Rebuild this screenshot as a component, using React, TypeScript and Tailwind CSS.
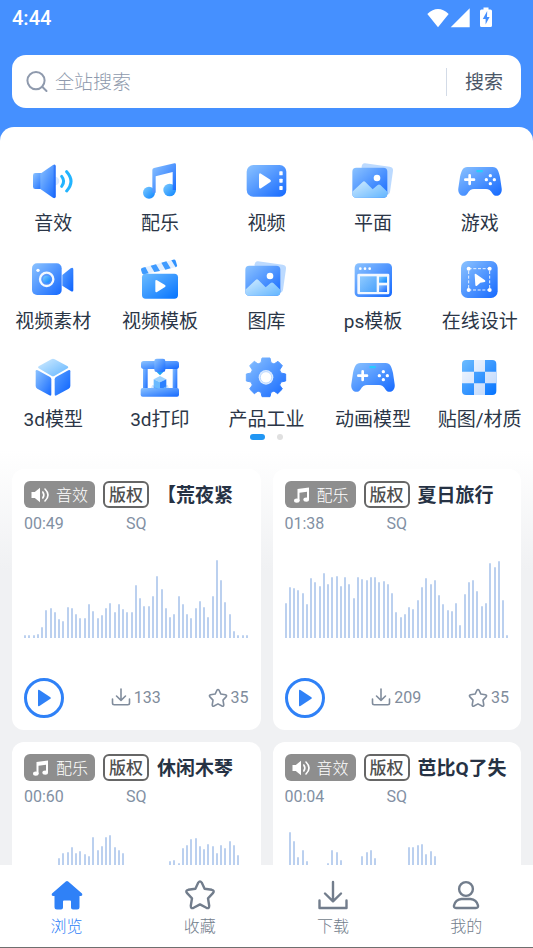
import React from 'react';

type TagKind = 'sound' | 'music';

interface Track {
  kind: TagKind;
  title: string;
  duration: string;
  quality: string;
  downloads: number;
  stars: number;
  wave: number[];
}

const tracks: Track[] = [
  {
    kind: 'sound',
    title: '【荒夜紧',
    duration: '00:49',
    quality: 'SQ',
    downloads: 133,
    stars: 35,
    wave: [
      3, 3, 3, 4, 11, 28, 30, 26, 19, 17, 31, 30, 24, 20, 20, 34, 27, 20, 23, 30, 35, 26, 34, 29, 26, 26, 53,
      40, 32, 32, 42, 62, 49, 30, 21, 24, 42, 34, 24, 20, 30, 37, 31, 21, 42, 78, 58, 36, 24, 7, 3, 3, 3,
    ],
  },
  {
    kind: 'music',
    title: '夏日旅行',
    duration: '01:38',
    quality: 'SQ',
    downloads: 209,
    stars: 35,
    wave: [
      35, 51, 50, 48, 45, 34, 60, 56, 52, 65, 54, 61, 62, 52, 61, 54, 40, 61, 59, 58, 61, 61, 56, 57, 54, 45,
      26, 21, 24, 31, 29, 38, 51, 60, 54, 58, 43, 34, 28, 27, 35, 13, 44, 56, 58, 47, 32, 35, 75, 71, 77, 38, 3,
    ],
  },
  {
    kind: 'music',
    title: '休闲木琴',
    duration: '00:60',
    quality: 'SQ',
    downloads: 121,
    stars: 28,
    wave: [
      3, 3, 4, 8, 15, 20, 30, 38, 53, 58, 59, 64, 58, 60, 57, 55, 74, 61, 65, 74, 76, 64, 61, 58, 40, 30, 20,
      12, 15, 24, 35, 45, 40, 41, 50, 51, 48, 63, 66, 72, 73, 65, 62, 67, 65, 58, 66, 63, 70, 66, 56, 10, 3,
    ],
  },
  {
    kind: 'sound',
    title: '芭比Q了失',
    duration: '00:04',
    quality: 'SQ',
    downloads: 96,
    stars: 17,
    wave: [
      46, 79, 70, 54, 61, 50, 38, 25, 20, 32, 48, 61, 59, 51, 36, 22, 18, 34, 55, 59, 61, 53, 38, 24, 16, 12,
      20, 30, 40, 64, 64, 66, 67, 57, 60, 55, 38, 26, 18, 12, 10, 8, 6, 5, 4, 3, 3, 3, 3, 3, 3, 3, 3,
    ],
  },
];

function SpeakerArt() {
  return (
    <>
      <circle cx="72" cy="66" r="13" fill="#dbe9ff" />
      <rect x="6" y="42" width="34" height="48" rx="7" fill="url(#blue)" />
      <path d="M28 44 L66 18 Q74 14 74 22 V112 Q74 120 66 116 L28 90Z" fill="url(#blue)" />
      <path d="M68 18 Q74 15 74 22 V112 Q74 119 68 117Z" fill="#1f66f5" opacity="0.6" />
      <path d="M92 52 Q104 67 92 82" fill="none" stroke="#22b4ff" strokeWidth="9" strokeLinecap="round" />
      <path d="M107 38 Q133 67 107 96" fill="none" stroke="#22b4ff" strokeWidth="9" strokeLinecap="round" />
    </>
  );
}

function NoteArt() {
  return (
    <>
      <circle cx="33" cy="101" r="18" fill="url(#aqua)" />
      <circle cx="95" cy="93" r="19" fill="url(#aqua)" />
      <path d="M43 33 Q43 28 48 27 L109 13 Q114 12 114 17 V93 H104 V39 L53 52 V101 H43Z" fill="url(#blue)" />
    </>
  );
}

function FilmArt() {
  return (
    <>
      <rect x="8" y="18" width="119" height="95" rx="20" fill="url(#blue)" />
      <path d="M45 48 Q45 41 51 44 L79 62 Q83 66 79 69 L51 88 Q45 90 45 84Z" fill="#fff" />
      <rect x="106" y="37" width="10" height="12" rx="2" fill="#fff" />
      <rect x="106" y="59" width="10" height="12" rx="2" fill="#fff" />
      <rect x="106" y="81" width="10" height="12" rx="2" fill="#fff" />
    </>
  );
}

function PictureArt() {
  return (
    <>
      <path d="M42 13 L116 23 Q127 25 126 35 L117 98 Q115 108 105 107 L30 97 L32 22 Q34 12 42 13Z" fill="#bcdaff" />
      <rect x="4" y="26" width="105" height="90" rx="12" fill="url(#blue)" />
      <path
        d="M4 98 L35 69 Q39 65 43 69 L65 91 L80 78 Q84 75 88 78 L109 98 V104 Q109 116 97 116 H16 Q4 116 4 104Z"
        fill="url(#sky)"
      />
      <circle cx="78" cy="57" r="10" fill="#fff" />
    </>
  );
}

function GamepadArt() {
  return (
    <>
      <path
        d="M28 24 H104 C118 24 122 36 126 54 L131 88 C134 108 114 118 104 104 C98 94 92 90 84 90 H48 C40 90 34 94 28 104 C18 118 -2 108 1 88 L6 54 C10 36 14 24 28 24Z"
        fill="url(#blue)"
      />
      <path d="M35 49 V75 M22 62 H48" stroke="#fff" strokeWidth="8" strokeLinecap="round" />
      <circle cx="97" cy="50" r="5" fill="#fff" />
      <circle cx="97" cy="74" r="5" fill="#fff" />
      <circle cx="85" cy="62" r="5" fill="#fff" />
      <circle cx="109" cy="62" r="5" fill="#fff" />
      <rect x="55" y="33" width="20" height="7" rx="3" fill="#27ccff" />
    </>
  );
}

function CameraArt() {
  return (
    <>
      <path d="M94 54 L119 34 Q127 29 127 38 V98 Q127 107 119 102 L94 86Z" fill="url(#deep)" />
      <rect x="3" y="19" width="89" height="95" rx="15" fill="url(#blue)" />
      <circle cx="47" cy="67" r="20" fill="none" stroke="#f2f8ff" strokeWidth="7" />
      <circle cx="47" cy="67" r="11" fill="url(#aqua)" />
      <circle cx="21" cy="40" r="5" fill="#fff" />
    </>
  );
}

function ClapperArt() {
  return (
    <>
      <path d="M9 38 Q8 33 14 32 L106 8 Q111 7 113 11 L117 25 Q118 29 113 31 L19 52 Q13 53 12 48Z" fill="#e4f0ff" />
      <path d="M9 38 Q8 33 14 32 L22 30 L32 49 L19 52 Q13 53 12 48Z" fill="#3f9bff" />
      <path d="M38 26 L54 22 L66 42 L49 45Z M70 17 L85 13 L98 34 L82 38Z" fill="#3f9bff" />
      <path d="M100 10 L106 8 Q111 7 113 11 L117 25 Q118 29 113 31Z" fill="#2f92ff" />
      <rect x="12" y="50" width="108" height="75" rx="11" fill="url(#azure)" />
      <path d="M52 73 Q52 67 57 70 L81 84 Q85 87 81 90 L57 105 Q52 107 52 102Z" fill="#fff" />
    </>
  );
}

function TemplateArt() {
  return (
    <>
      <rect x="11" y="19" width="112" height="101" rx="13" fill="url(#blue)" />
      <circle cx="28" cy="35" r="4" fill="#fff" />
      <circle cx="42" cy="35" r="4" fill="#fff" />
      <circle cx="56" cy="35" r="4" fill="#fff" />
      <rect x="19" y="50" width="96" height="62" rx="4" fill="#f3f8ff" />
      <rect x="27" y="58" width="50" height="47" fill="url(#sky2)" />
      <rect x="84" y="59" width="24" height="18" fill="url(#aqua)" />
      <rect x="84" y="85" width="24" height="20" fill="url(#blue)" />
    </>
  );
}

function DesignArt() {
  return (
    <>
      <rect x="9" y="12" width="110" height="111" rx="20" fill="url(#blue)" />
      <rect x="32" y="35" width="63" height="64" fill="none" stroke="#e8f2ff" strokeWidth="3" strokeDasharray="9 5" />
      <circle cx="32" cy="35" r="6" fill="#fff" />
      <circle cx="95" cy="35" r="6" fill="#fff" />
      <circle cx="32" cy="99" r="6" fill="#fff" />
      <circle cx="95" cy="99" r="6" fill="#fff" />
      <path d="M50 53 Q50 48 54 51 L81 70 Q84 74 80 75 L67 77 L57 86 Q52 88 52 84Z" fill="#fff" />
    </>
  );
}

function CubeArt() {
  return (
    <>
      <path d="M61 13 Q66 10 71 13 L110 34 Q114 37 110 40 L71 62 Q66 65 61 62 L23 40 Q19 37 23 34Z" fill="url(#sky)" />
      <path d="M14 49 Q14 43 20 46 L57 66 Q61 69 61 73 V118 Q61 124 55 121 L19 101 Q14 98 14 93Z" fill="url(#blue)" />
      <path d="M118 49 Q118 43 112 46 L75 66 Q71 69 71 73 V118 Q71 124 77 121 L113 101 Q118 98 118 93Z" fill="url(#deep)" />
    </>
  );
}

function PrinterArt() {
  return (
    <>
      <rect x="15" y="30" width="14" height="80" fill="url(#blue)" />
      <rect x="104" y="30" width="14" height="80" fill="url(#blue)" />
      <rect x="9" y="18" width="114" height="24" rx="8" fill="url(#blue)" />
      <rect x="49" y="11" width="33" height="40" rx="7" fill="url(#blue)" />
      <path d="M56 51 H76 L66 61Z" fill="#1fa4f5" />
      <path d="M43 90 H89 L95 104 H36Z" fill="#d3e6ff" />
      <path d="M66 63 L85 73 L66 82 L47 73Z" fill="#9ed3ff" />
      <path d="M47 73 L66 82 V104 L47 95Z" fill="#6bbaff" />
      <path d="M85 73 L66 82 V104 L85 95Z" fill="#2b80ff" />
      <rect x="8" y="99" width="115" height="26" rx="6" fill="url(#blue)" />
      <path d="M47 94 L66 104 L85 94 V99 L66 106 L47 99Z" fill="#5aa9ff" />
    </>
  );
}

function GearArt() {
  return (
    <>
      <path
        d="M54 9 H78 L81 23 L90 27 L102 19 L115 32 L107 45 L111 54 L125 57 V78 L111 81 L107 90 L115 102 L101 116 L90 108 L81 112 L78 125 H54 L51 112 L42 108 L31 116 L17 102 L25 90 L21 81 L7 78 V57 L21 54 L25 45 L17 32 L31 19 L42 27 L51 23Z"
        fill="url(#blue)"
        stroke="url(#blue)"
        strokeWidth="3"
        strokeLinejoin="round"
      />
      <circle cx="66" cy="67" r="22" fill="#dcebff" />
      <circle cx="66" cy="67" r="17" fill="#fff" stroke="#a9cdff" strokeWidth="2" />
    </>
  );
}

function CheckerArt() {
  return (
    <>
      <rect x="12" y="15" width="103" height="105" rx="12" fill="url(#azure)" />
      <path d="M48 15 H81 V50 H48Z M12 50 H48 V85 H12Z M81 50 H115 V85 H81Z M48 85 H81 V120 H48Z" fill="url(#pale)" />
    </>
  );
}

const categories = [
  { name: '音效', Art: SpeakerArt },
  { name: '配乐', Art: NoteArt },
  { name: '视频', Art: FilmArt },
  { name: '平面', Art: PictureArt },
  { name: '游戏', Art: GamepadArt },
  { name: '视频素材', Art: CameraArt },
  { name: '视频模板', Art: ClapperArt },
  { name: '图库', Art: PictureArt },
  { name: 'ps模板', Art: TemplateArt },
  { name: '在线设计', Art: DesignArt },
  { name: '3d模型', Art: CubeArt },
  { name: '3d打印', Art: PrinterArt },
  { name: '产品工业', Art: GearArt },
  { name: '动画模型', Art: GamepadArt },
  { name: '贴图/材质', Art: CheckerArt },
];

// Gradients shared by all category icons
function Gradients() {
  const stops: [string, string, string][] = [
    ['blue', '#8cc3ff', '#1569ff'],
    ['deep', '#5aa0ff', '#0b62ff'],
    ['azure', '#6cbcff', '#0573ff'],
    ['aqua', '#7fcbff', '#0a84ff'],
    ['sky', '#d2ecff', '#62b5ff'],
    ['sky2', '#8fcaff', '#4ba2fb'],
    ['pale', '#f4f8ff', '#bcd6fb'],
  ];
  return (
    <svg className="absolute size-0" aria-hidden="true">
      <defs>
        {stops.map(([id, from, to]) => (
          <linearGradient key={id} id={id} x1="0" y1="0" x2="1" y2="1">
            <stop offset="0" stopColor={from} />
            <stop offset="1" stopColor={to} />
          </linearGradient>
        ))}
      </defs>
    </svg>
  );
}

function StarIcon({ className }: { className: string }) {
  return (
    <svg viewBox="0 0 32 32" className={className} fill="none" stroke="currentColor" strokeLinejoin="round" aria-hidden="true">
      <path d="M14.3 3.6 Q16 1.2 17.7 3.6 L20.6 9.7 L27.8 10.8 Q31 11.6 28.9 14.2 L24 19.3 L25.2 26.8 Q25.2 30 22.4 28.8 L16 25.4 L9.6 28.8 Q6.8 30 6.8 26.8 L8 19.3 L3.1 14.2 Q1 11.6 4.2 10.8 L11.4 9.7Z" />
    </svg>
  );
}

function TagIcon({ kind }: { kind: TagKind }) {
  if (kind === 'sound') {
    return (
      <svg viewBox="0 0 20 20" className="size-5" fill="none" stroke="#fff" strokeLinecap="round" aria-hidden="true">
        <path d="M0.5 7 H3.8 L9 2.8 V17.2 L3.8 13 H0.5Z" fill="#fff" stroke="none" />
        <path d="M11.8 7 Q13.9 10 11.8 13" strokeWidth="1.6" />
        <path d="M14 4 Q20 10 14 16" strokeWidth="1.6" />
      </svg>
    );
  }
  return (
    <svg viewBox="0 0 20 20" className="size-5" fill="#fff" aria-hidden="true">
      <path d="M5.5 4 L17 2.5 V14.5 H15 V6.8 L7.5 7.8 V16 H5.5Z" />
      <ellipse cx="4.8" cy="15.6" rx="2.8" ry="2.2" />
      <ellipse cx="14.2" cy="14.6" rx="2.8" ry="2.2" />
    </svg>
  );
}

function TrackCard({ track }: { track: Track }) {
  return (
    <article className="min-w-0 rounded-xl bg-white p-3">
      <div className="flex h-[27px] items-center gap-2 overflow-hidden whitespace-nowrap">
        <span className="flex h-full shrink-0 items-center gap-[5px] rounded-md bg-[#8e8e8e] px-[7px] text-base font-light text-white">
          <TagIcon kind={track.kind} />
          <span className="pt-0.5 leading-[25px]">{track.kind === 'sound' ? '音效' : '配乐'}</span>
        </span>
        <span className="flex h-full shrink-0 items-center rounded-md border-2 border-[#666] px-1 pt-0.5 text-[17px] leading-[21px] font-medium text-[#505050]">
          版权
        </span>
        <h2 className="pt-0.5 text-[19px] leading-[27px] font-bold text-[#263244]">{track.title}</h2>
      </div>
      <div className="mt-1 flex h-6 items-center text-base text-[#8290a3]">
        <span className="w-[102px]">{track.duration}</span>
        <span>{track.quality}</span>
      </div>
      <div className="mt-[22px] flex h-20 items-end justify-between">
        {track.wave.map((h, i) => (
          <span key={i} className="w-[2px] rounded-t-full bg-[#bbd0ef]" style={{ height: h }} />
        ))}
      </div>
      <div className="mt-10 flex items-center justify-between text-base text-[#808c9c]">
        <button
          type="button"
          aria-label="播放"
          className="flex size-10 items-center justify-center rounded-full border-3 border-[#2f81f7] text-[#2f81f7]"
        >
          <svg viewBox="0 0 16 18" className="h-[18px] w-4" fill="currentColor" aria-hidden="true">
            <path d="M2 1.8 Q2 0.2 3.4 1 L14.4 8.2 Q15.4 9 14.4 9.8 L3.4 17 Q2 17.8 2 16.2Z" />
          </svg>
        </button>
        <button type="button" className="flex items-center gap-[3px]">
          <svg
            viewBox="0 0 20 20"
            className="size-5"
            fill="none"
            stroke="currentColor"
            strokeWidth="1.6"
            strokeLinecap="round"
            strokeLinejoin="round"
            aria-hidden="true"
          >
            <path d="M10 1 V12 M5.5 8 L10 12.3 L14.5 8 M1.5 11 V15 Q1.5 16.7 3.2 16.7 H16.8 Q18.5 16.7 18.5 15 V11" />
          </svg>
          {track.downloads}
        </button>
        <button type="button" className="flex items-center gap-[3px]">
          <StarIcon className="size-5 stroke-[2.6]" />
          {track.stars}
        </button>
      </div>
    </article>
  );
}

function StatusBar() {
  return (
    <div className="flex h-9 items-center justify-between pr-10 pl-3 text-white">
      <span className="text-xl leading-9 font-medium">4:44</span>
      <div className="flex items-center">
        <svg viewBox="0 0 66 66" className="size-[22px]" fill="currentColor" aria-hidden="true">
          <path d="M33 61 L1 21 Q33 -9 65 21Z" />
        </svg>
        <svg viewBox="0 0 66 66" className="size-[22px]" fill="currentColor" aria-hidden="true">
          <path d="M62 4 V61 H5Z" />
        </svg>
        <svg viewBox="0 0 14 22" className="ml-2 h-[22px] w-3.5" aria-hidden="true">
          <path
            d="M4.5 0.5 H9.5 V2.5 H11.5 Q13 2.5 13 4 V18.5 Q13 20 11.5 20 H2.5 Q1 20 1 18.5 V4 Q1 2.5 2.5 2.5 H4.5Z"
            fill="currentColor"
          />
          <path d="M8.2 4 L3.8 12 H6.6 V17.5 L10.6 10 H8Z" fill="#4590ff" />
        </svg>
      </div>
    </div>
  );
}

function SearchBar() {
  return (
    <form role="search" className="mx-3 mt-[19px] flex h-[53px] items-center rounded-[14px] bg-white pr-[18px] pl-[14px]">
      <svg viewBox="0 0 22 22" className="size-[22px] shrink-0" fill="none" stroke="#8f9aad" strokeWidth="2" strokeLinecap="round" aria-hidden="true">
        <circle cx="10" cy="9.6" r="8.6" />
        <path d="M16.2 15.8 L20.5 20" />
      </svg>
      <input
        type="text"
        aria-label="全站搜索"
        placeholder="全站搜索"
        className="ml-[7px] min-w-0 flex-1 pt-1 text-[19px] font-light text-[#263244] outline-none placeholder:text-[#8f9aad]"
      />
      <span className="h-7 w-px bg-[#d3dbe7]" />
      <button type="submit" className="ml-[18px] pt-1 text-[19px] text-[#4b5768]">
        搜索
      </button>
    </form>
  );
}

const tabs = [
  {
    name: '浏览',
    icon: (
      <svg viewBox="0 0 32 32" className="size-8" fill="currentColor" aria-hidden="true">
        <path d="M14.8 2.5 Q16 1.4 17.2 2.5 L31 14.4 Q32 16.6 29.8 17 H28.5 V28 Q28.5 30.5 26 30.5 H22 Q20 30.5 20 28.5 V22.5 Q20 21.5 19 21.5 H13 Q12 21.5 12 22.5 V28.5 Q12 30.5 10 30.5 H6 Q3.5 30.5 3.5 28 V17 H2.2 Q0 16.6 1 14.4Z" />
      </svg>
    ),
  },
  { name: '收藏', icon: <StarIcon className="size-8 stroke-[2.4]" /> },
  {
    name: '下载',
    icon: (
      <svg
        viewBox="0 0 32 32"
        className="size-8"
        fill="none"
        stroke="currentColor"
        strokeWidth="2.4"
        strokeLinecap="round"
        strokeLinejoin="round"
        aria-hidden="true"
      >
        <path d="M16 3 V22 M8 14.5 L16 22.3 L24 14.5 M2.5 21.5 V29 H29.5 V21.5" />
      </svg>
    ),
  },
  {
    name: '我的',
    icon: (
      <svg viewBox="0 0 32 32" className="size-8" fill="none" stroke="currentColor" strokeWidth="2.4" aria-hidden="true">
        <circle cx="16" cy="10" r="6.9" />
        <path d="M11.5 20 H20.5 Q26.5 20.5 28 26.5 Q28.4 29 26 29 H6 Q3.6 29 4 26.5 Q5.5 20.5 11.5 20Z" />
      </svg>
    ),
  },
];

export default function App() {
  return (
    <div className="flex h-dvh flex-col bg-[#4590ff] font-['Roboto','Noto_Sans_CJK_SC',sans-serif]">
      <Gradients />
      <header className="shrink-0 pb-[19px]">
        <StatusBar />
        <SearchBar />
      </header>

      <main className="min-h-0 flex-1 overflow-y-auto rounded-t-[14px] bg-white [scrollbar-width:none]">
        <section className="grid grid-cols-5 gap-y-[19px] pt-8">
          {categories.map(({ name, Art }) => (
            <a key={name} href="#" className="flex flex-col items-center gap-[7px] whitespace-nowrap">
              <svg viewBox="0 0 132 132" className="size-11" aria-hidden="true">
                <Art />
              </svg>
              <span className="h-7 text-[19px] leading-7 text-[#2b3647]">{name}</span>
            </a>
          ))}
        </section>
        <div className="flex h-1.5 items-center justify-center gap-3">
          <span className="h-1.5 w-[15px] rounded-full bg-[#2196f3]" />
          <span className="size-1.5 rounded-full bg-[#e0e0e0]" />
        </div>

        <section className="bg-[linear-gradient(to_bottom,#fff_10px,#f0f1f3_130px)] px-3 pt-[29px] pb-3">
          <div className="grid grid-cols-2 gap-3">
            {tracks.map((track) => (
              <TrackCard key={track.title} track={track} />
            ))}
          </div>
        </section>
      </main>

      <nav className="grid shrink-0 grid-cols-4 border-b border-[#6f6f6f] bg-white pt-3.5 pb-2">
        {tabs.map((tab, i) => (
          <a
            key={tab.name}
            href="#"
            className={`flex flex-col items-center gap-1 text-base font-light ${i === 0 ? 'text-[#2f81f7]' : 'text-[#727d8c]'}`}
          >
            {tab.icon}
            {tab.name}
          </a>
        ))}
      </nav>
    </div>
  );
}
